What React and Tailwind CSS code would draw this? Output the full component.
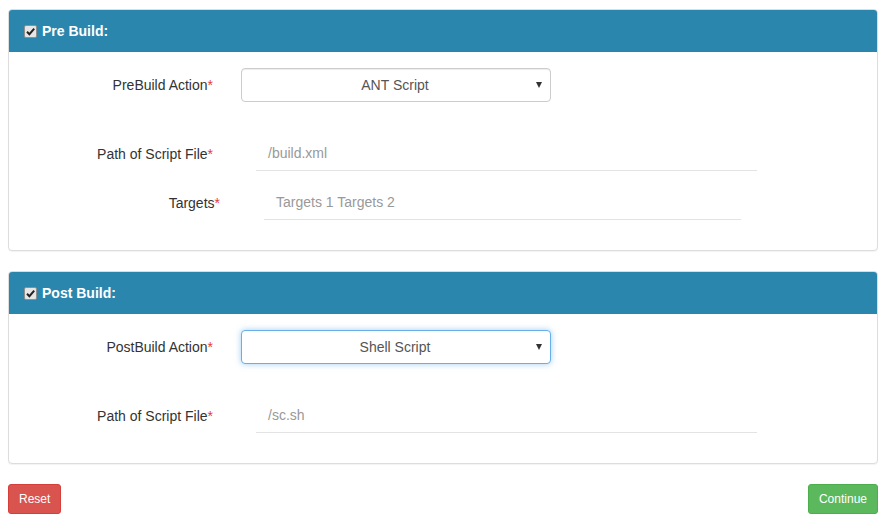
import { useState } from "react";

function CheckIcon() {
    return (
        <svg width="13" height="13" viewBox="0 0 13 13" className="shrink-0">
            <rect x="0.5" y="0.5" width="12" height="12" rx="1.5" fill="#e6e6e6" stroke="#8f8f8f" />
            <path d="M3 6.8 L5.4 9.2 L10.2 3.6" fill="none" stroke="#222" strokeWidth="2" />
        </svg>
    );
}

function Label({ text, width }) {
    return (
        <div className={`${width} shrink-0 text-right text-[14px] text-[#333]`}>
            {text}
            <span className="text-[#e4393c]">*</span>
        </div>
    );
}

function FakeSelect({ value, focused }) {
    return (
        <div
            className={`ml-[28px] flex h-[34px] w-[310px] items-center rounded-[4px] border bg-white pl-3 pr-2 text-[14px] text-[#555] ${
                focused
                    ? "border-[#66afe9] shadow-[0_0_6px_rgba(102,175,233,0.6)]"
                    : "border-[#ccc] shadow-[inset_0_1px_1px_rgba(0,0,0,0.075)]"
            }`}
        >
            <span className="flex-1 text-center">{value}</span>
            <span className="h-0 w-0 border-x-[3.5px] border-t-[6px] border-x-transparent border-t-[#333]" />
        </div>
    );
}

function LineInput({ placeholder, className }) {
    return (
        <div className={`flex h-[34px] items-center border-b border-[#e3e3e3] px-3 text-[14px] text-[#999] ${className}`}>
            {placeholder}
        </div>
    );
}

function Panel({ title, children }) {
    return (
        <div className="rounded-[4px] border border-[#ddd] bg-white shadow-[0_1px_1px_rgba(0,0,0,0.05)]">
            <div className="flex h-[42px] items-center gap-[4px] rounded-t-[3px] bg-[#2a86ad] pl-[15px] text-[14px] font-bold text-white">
                <CheckIcon />
                <span className="ml-[1px]">{title}</span>
            </div>
            {children}
        </div>
    );
}

export default function App() {
    const [pre] = useState("ANT Script");
    const [post] = useState("Shell Script");

    return (
        <div className="min-h-[522px] w-[895px] bg-white pl-[8px] pt-[9px] font-['Liberation_Sans',Arial,sans-serif]">
            <div className="w-[870px]">
                {/* Pre build */}
                <Panel title="Pre Build:">
                    <div className="pb-[30px] pt-[16px]">
                        <div className="flex items-center">
                            <Label text="PreBuild Action" width="w-[204px]" />
                            <FakeSelect value={pre} />
                        </div>
                        <div className="mt-[35px] flex items-center">
                            <Label text="Path of Script File" width="w-[204px]" />
                            <LineInput placeholder="/build.xml" className="ml-[43px] w-[501px]" />
                        </div>
                        <div className="mt-[15px] flex items-center">
                            <Label text="Targets" width="w-[211px]" />
                            <LineInput placeholder="Targets 1 Targets 2" className="ml-[44px] w-[477px]" />
                        </div>
                    </div>
                </Panel>

                {/* Post build */}
                <div className="mt-[20px]">
                    <Panel title="Post Build:">
                        <div className="pb-[30px] pt-[16px]">
                            <div className="flex items-center">
                                <Label text="PostBuild Action" width="w-[204px]" />
                                <FakeSelect value={post} focused />
                            </div>
                            <div className="mt-[35px] flex items-center">
                                <Label text="Path of Script File" width="w-[204px]" />
                                <LineInput placeholder="/sc.sh" className="ml-[43px] w-[501px]" />
                            </div>
                        </div>
                    </Panel>
                </div>

                {/* Buttons */}
                <div className="mt-[20px] flex justify-between">
                    <button className="h-[30px] rounded-[3px] border border-[#d43f3a] bg-[#d9534f] px-[10px] text-[12px] text-white">
                        Reset
                    </button>
                    <button className="h-[30px] rounded-[3px] border border-[#4cae4c] bg-[#5cb85c] px-[10px] text-[12px] text-white">
                        Continue
                    </button>
                </div>
            </div>
        </div>
    );
}
